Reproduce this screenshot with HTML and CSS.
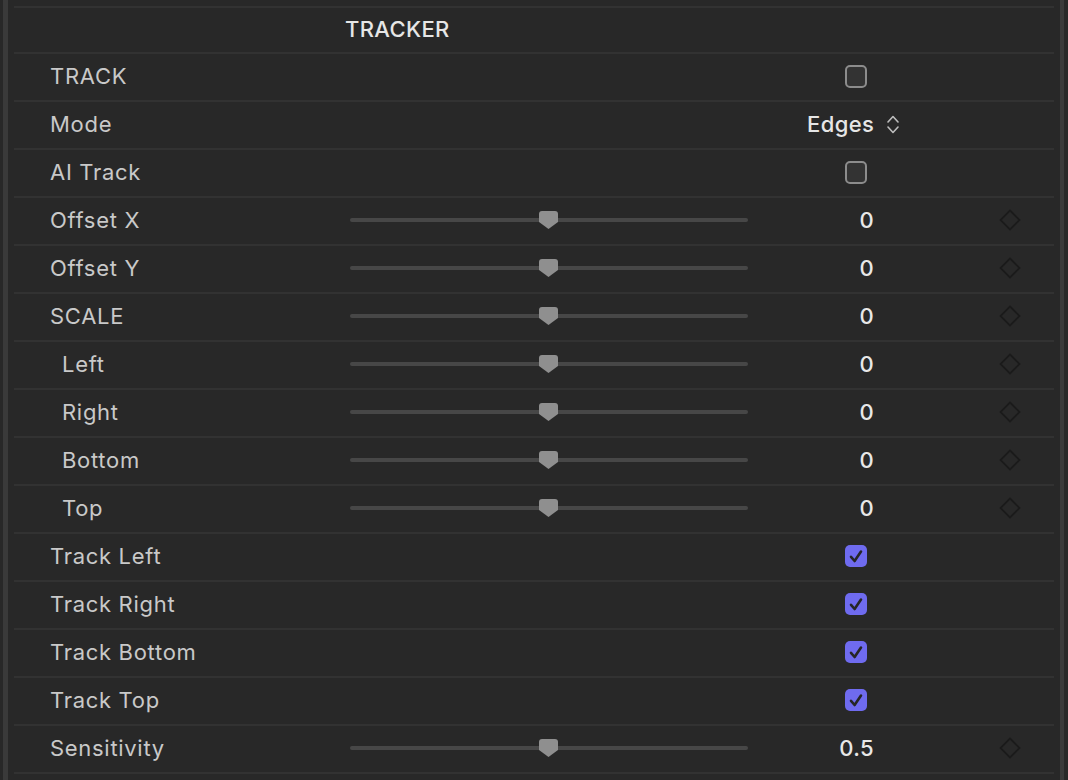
FILE: index.html
```html
<!DOCTYPE html>
<html>
<head>
<meta charset="utf-8">
<link rel="stylesheet" href="styles.css">
</head>
<body>
<div class="frame">
  <div class="edge edge-left"></div>
  <div class="panel">
    <div class="header"><span class="title">TRACKER</span></div>

    <div class="row">
      <span class="label">TRACK</span>
      <span class="cell-check"><span class="check"></span></span>
      <span></span>
    </div>
    <div class="row">
      <span class="label">Mode</span>
      <span class="cell-popup"><span class="popup-text">Edges</span>
        <svg class="updown" width="12" height="19" viewBox="0 0 12 19"><path d="M1 7 L6 1.5 L11 7 M1 12 L6 17.5 L11 12" fill="none" stroke="#bdbdbd" stroke-width="1.6" stroke-linecap="round" stroke-linejoin="round"/></svg>
      </span>
    </div>
    <div class="row">
      <span class="label">AI Track</span>
      <span class="cell-check"><span class="check"></span></span>
      <span></span>
    </div>

    <div class="row">
      <span class="label">Offset X</span>
      <span class="slider"><span class="track"></span><svg class="thumb" width="19" height="18" viewBox="0 0 19 18"><path d="M3 0 H16 Q19 0 19 3 V11 L9.5 18 L0 11 V3 Q0 0 3 0 Z" fill="#8f8f8f"/></svg></span>
      <span class="value">0</span>
      <span class="key"><svg width="22" height="22" viewBox="0 0 22 22"><path d="M11 1.5 L20.5 11 L11 20.5 L1.5 11 Z" fill="none" stroke="#1b1b1b" stroke-width="1.8"/></svg></span>
    </div>
    <div class="row">
      <span class="label">Offset Y</span>
      <span class="slider"><span class="track"></span><svg class="thumb" width="19" height="18" viewBox="0 0 19 18"><path d="M3 0 H16 Q19 0 19 3 V11 L9.5 18 L0 11 V3 Q0 0 3 0 Z" fill="#8f8f8f"/></svg></span>
      <span class="value">0</span>
      <span class="key"><svg width="22" height="22" viewBox="0 0 22 22"><path d="M11 1.5 L20.5 11 L11 20.5 L1.5 11 Z" fill="none" stroke="#1b1b1b" stroke-width="1.8"/></svg></span>
    </div>
    <div class="row">
      <span class="label">SCALE</span>
      <span class="slider"><span class="track"></span><svg class="thumb" width="19" height="18" viewBox="0 0 19 18"><path d="M3 0 H16 Q19 0 19 3 V11 L9.5 18 L0 11 V3 Q0 0 3 0 Z" fill="#8f8f8f"/></svg></span>
      <span class="value">0</span>
      <span class="key"><svg width="22" height="22" viewBox="0 0 22 22"><path d="M11 1.5 L20.5 11 L11 20.5 L1.5 11 Z" fill="none" stroke="#1b1b1b" stroke-width="1.8"/></svg></span>
    </div>
    <div class="row">
      <span class="label sub">Left</span>
      <span class="slider"><span class="track"></span><svg class="thumb" width="19" height="18" viewBox="0 0 19 18"><path d="M3 0 H16 Q19 0 19 3 V11 L9.5 18 L0 11 V3 Q0 0 3 0 Z" fill="#8f8f8f"/></svg></span>
      <span class="value">0</span>
      <span class="key"><svg width="22" height="22" viewBox="0 0 22 22"><path d="M11 1.5 L20.5 11 L11 20.5 L1.5 11 Z" fill="none" stroke="#1b1b1b" stroke-width="1.8"/></svg></span>
    </div>
    <div class="row">
      <span class="label sub">Right</span>
      <span class="slider"><span class="track"></span><svg class="thumb" width="19" height="18" viewBox="0 0 19 18"><path d="M3 0 H16 Q19 0 19 3 V11 L9.5 18 L0 11 V3 Q0 0 3 0 Z" fill="#8f8f8f"/></svg></span>
      <span class="value">0</span>
      <span class="key"><svg width="22" height="22" viewBox="0 0 22 22"><path d="M11 1.5 L20.5 11 L11 20.5 L1.5 11 Z" fill="none" stroke="#1b1b1b" stroke-width="1.8"/></svg></span>
    </div>
    <div class="row">
      <span class="label sub">Bottom</span>
      <span class="slider"><span class="track"></span><svg class="thumb" width="19" height="18" viewBox="0 0 19 18"><path d="M3 0 H16 Q19 0 19 3 V11 L9.5 18 L0 11 V3 Q0 0 3 0 Z" fill="#8f8f8f"/></svg></span>
      <span class="value">0</span>
      <span class="key"><svg width="22" height="22" viewBox="0 0 22 22"><path d="M11 1.5 L20.5 11 L11 20.5 L1.5 11 Z" fill="none" stroke="#1b1b1b" stroke-width="1.8"/></svg></span>
    </div>
    <div class="row">
      <span class="label sub">Top</span>
      <span class="slider"><span class="track"></span><svg class="thumb" width="19" height="18" viewBox="0 0 19 18"><path d="M3 0 H16 Q19 0 19 3 V11 L9.5 18 L0 11 V3 Q0 0 3 0 Z" fill="#8f8f8f"/></svg></span>
      <span class="value">0</span>
      <span class="key"><svg width="22" height="22" viewBox="0 0 22 22"><path d="M11 1.5 L20.5 11 L11 20.5 L1.5 11 Z" fill="none" stroke="#1b1b1b" stroke-width="1.8"/></svg></span>
    </div>

    <div class="row">
      <span class="label">Track Left</span>
      <span class="cell-check"><span class="check on"><svg width="22" height="22" viewBox="0 0 22 22"><path d="M6 11.8 L9.6 16 L16 6.5" fill="none" stroke="#262626" stroke-width="2.6" stroke-linecap="round" stroke-linejoin="round"/></svg></span></span>
    </div>
    <div class="row">
      <span class="label">Track Right</span>
      <span class="cell-check"><span class="check on"><svg width="22" height="22" viewBox="0 0 22 22"><path d="M6 11.8 L9.6 16 L16 6.5" fill="none" stroke="#262626" stroke-width="2.6" stroke-linecap="round" stroke-linejoin="round"/></svg></span></span>
    </div>
    <div class="row">
      <span class="label">Track Bottom</span>
      <span class="cell-check"><span class="check on"><svg width="22" height="22" viewBox="0 0 22 22"><path d="M6 11.8 L9.6 16 L16 6.5" fill="none" stroke="#262626" stroke-width="2.6" stroke-linecap="round" stroke-linejoin="round"/></svg></span></span>
    </div>
    <div class="row">
      <span class="label">Track Top</span>
      <span class="cell-check"><span class="check on"><svg width="22" height="22" viewBox="0 0 22 22"><path d="M6 11.8 L9.6 16 L16 6.5" fill="none" stroke="#262626" stroke-width="2.6" stroke-linecap="round" stroke-linejoin="round"/></svg></span></span>
    </div>
    <div class="row">
      <span class="label">Sensitivity</span>
      <span class="slider"><span class="track"></span><svg class="thumb" width="19" height="18" viewBox="0 0 19 18"><path d="M3 0 H16 Q19 0 19 3 V11 L9.5 18 L0 11 V3 Q0 0 3 0 Z" fill="#8f8f8f"/></svg></span>
      <span class="value">0.5</span>
      <span class="key"><svg width="22" height="22" viewBox="0 0 22 22"><path d="M11 1.5 L20.5 11 L11 20.5 L1.5 11 Z" fill="none" stroke="#1b1b1b" stroke-width="1.8"/></svg></span>
    </div>
    <div class="row"></div>
  </div>
  <div class="edge edge-right"></div>
</div>
</body>
</html>
```

FILE: styles.css
```css
html, body {
  margin: 0;
  padding: 0;
  background: #282828;
  height: 780px;
  overflow: hidden;
}

body {
  font-family: Inter, "Noto Sans", "Liberation Sans", sans-serif;
  font-size: 22px;
  color: #c9c9c9;
}

.frame {
  display: flex;
  align-items: stretch;
  height: 780px;
  overflow: hidden;
}

.edge {
  width: 5px;
  background: #3a3a3a;
  flex: none;
}

.edge-left {
  margin-left: 3px;
  margin-right: 6px;
}

.edge-right {
  width: 4px;
  margin-left: 6px;
}

.panel {
  width: 1040px;
  flex: none;
  padding-top: 6px;
  overflow: hidden;
}

.header {
  height: 44px;
  border-top: 2px solid #323232;
  display: flex;
  align-items: center;
  padding-left: 331px;
}

.title {
  color: #e6e6e6;
  font-weight: 500;
  letter-spacing: 0.35px;
  margin-top: -3px;
}

.row {
  height: 46px;
  border-top: 2px solid #323232;
  display: grid;
  grid-template-columns: 300px 398px 126px 1fr;
  align-items: center;
  padding-left: 36px;
}

.label {
  letter-spacing: 0.7px;
  white-space: nowrap;
  margin-top: -2px;
}

.label.sub {
  padding-left: 12px;
}

.cell-check {
  grid-column: 3;
  justify-self: end;
  margin-right: 7px;
  display: flex;
}

.check {
  box-sizing: border-box;
  width: 22px;
  height: 23px;
  border: 2px solid #8c8c8c;
  border-radius: 5px;
  background: #333333;
  display: block;
  margin-top: -2px;
}

.check.on {
  border: none;
  background: #6f6bef;
  height: 22px;
}

.check.on svg {
  display: block;
}

.cell-popup {
  grid-column: 3 / 5;
  display: flex;
  align-items: center;
  padding-left: 59px;
  gap: 13px;
  margin-top: -2px;
}

.popup-text {
  color: #e6e6e6;
  font-weight: 500;
  letter-spacing: 0.4px;
}

.updown {
  display: block;
}

.slider {
  position: relative;
  height: 20px;
  display: flex;
  align-items: center;
}

.track {
  display: block;
  width: 100%;
  height: 4px;
  border-radius: 2px;
  background: #474747;
  margin-top: -3px;
}

.thumb {
  position: absolute;
  left: 189px;
  top: 0;
}

.value {
  justify-self: end;
  color: #e8e8e8;
  font-weight: 500;
  letter-spacing: 0.4px;
  margin-top: -2px;
}

.key {
  display: flex;
  padding-left: 125px;
  margin-top: -2px;
}
```
